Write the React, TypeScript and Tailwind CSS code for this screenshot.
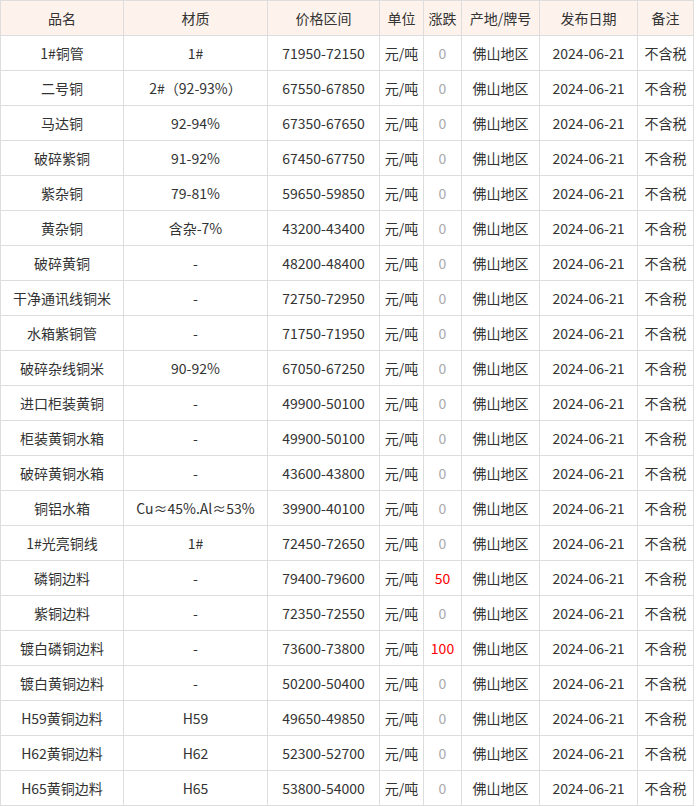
const rows: [string, string, string, string][] = [
["1#铜管","1#","71950-72150","0"],
["二号铜","2#（92-93%）","67550-67850","0"],
["马达铜","92-94%","67350-67650","0"],
["破碎紫铜","91-92%","67450-67750","0"],
["紫杂铜","79-81%","59650-59850","0"],
["黄杂铜","含杂-7%","43200-43400","0"],
["破碎黄铜","-","48200-48400","0"],
["干净通讯线铜米","-","72750-72950","0"],
["水箱紫铜管","-","71750-71950","0"],
["破碎杂线铜米","90-92%","67050-67250","0"],
["进口柜装黄铜","-","49900-50100","0"],
["柜装黄铜水箱","-","49900-50100","0"],
["破碎黄铜水箱","-","43600-43800","0"],
["铜铝水箱","Cu≈45%.Al≈53%","39900-40100","0"],
["1#光亮铜线","1#","72450-72650","0"],
["磷铜边料","-","79400-79600","50"],
["紫铜边料","-","72350-72550","0"],
["镀白磷铜边料","-","73600-73800","100"],
["镀白黄铜边料","-","50200-50400","0"],
["H59黄铜边料","H59","49650-49850","0"],
["H62黄铜边料","H62","52300-52700","0"],
["H65黄铜边料","H65","53800-54000","0"],
];
const widths = [123,144,112,44,38,78,98,56];
const heads = ["品名","材质","价格区间","单位","涨跌","产地/牌号","发布日期","备注"];
export default function App(){
  return (
    <div className="w-[696px] bg-white" style={{fontFamily:'"Microsoft YaHei","Noto Sans CJK SC",sans-serif'}}>
      <table className="border-collapse text-[14px] text-[#333] table-fixed w-[694px]">
        <colgroup>{widths.map((w,i)=><col key={i} style={{width:w}}/>)}</colgroup>
        <thead>
          <tr className="bg-[#fdf2ec] h-[35px]">
            {heads.map(h=><th key={h} className="border border-[#dddddd] font-normal text-center p-0">{h}</th>)}
          </tr>
        </thead>
        <tbody>
          {rows.map((r,i)=>(
            <tr key={i} className="h-[35px]">
              <td className="border border-[#dddddd] text-center p-0 whitespace-nowrap">{r[0]}</td>
              <td className="border border-[#dddddd] text-center p-0 whitespace-nowrap">{r[1]}</td>
              <td className="border border-[#dddddd] text-center p-0">{r[2]}</td>
              <td className="border border-[#dddddd] text-center p-0">元/吨</td>
              <td className={`border border-[#dddddd] text-center p-0 ${r[3]==="0"?"text-[#aaaaaa]":"text-[#ff0000]"}`}>{r[3]}</td>
              <td className="border border-[#dddddd] text-center p-0">佛山地区</td>
              <td className="border border-[#dddddd] text-center p-0">2024-06-21</td>
              <td className="border border-[#dddddd] text-center p-0">不含税</td>
            </tr>
          ))}
        </tbody>
      </table>
    </div>
  );
}
